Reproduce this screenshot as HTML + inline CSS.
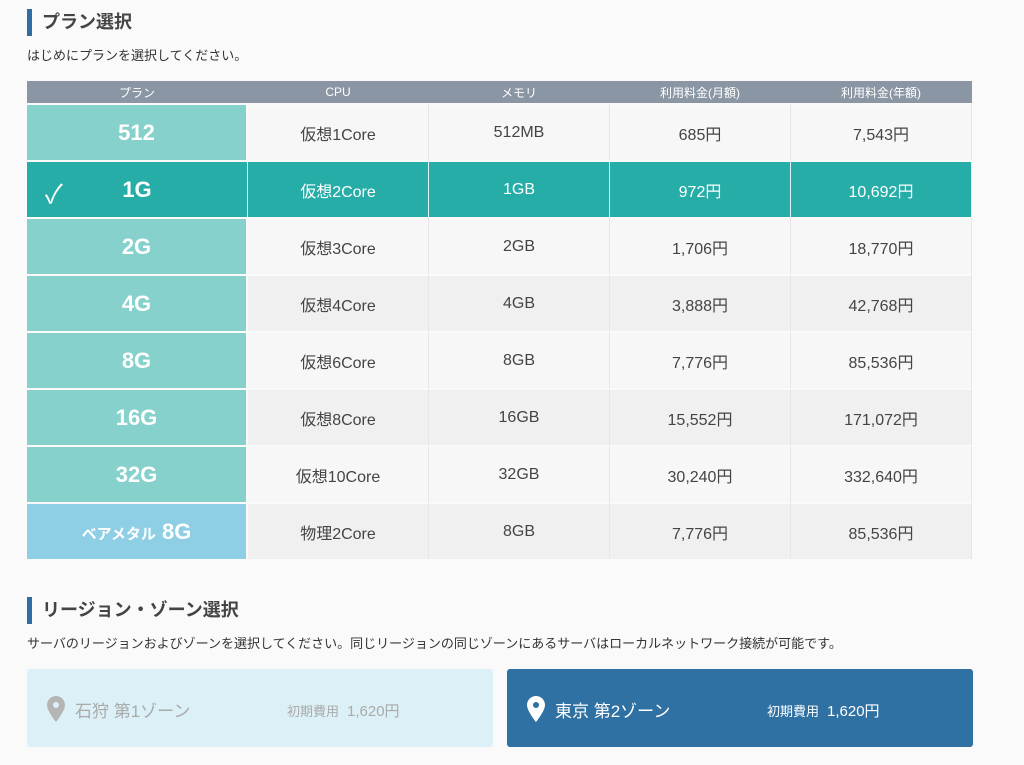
<!DOCTYPE html>
<html><head><meta charset="utf-8"><style>
*{margin:0;padding:0;box-sizing:border-box}
body{width:1024px;height:765px;background:#fafafa;font-family:"Liberation Sans","Noto Sans CJK JP",sans-serif;color:#333;position:relative;overflow:hidden}
.h{position:absolute;left:27px;border-left:5px solid #2e6ea5;padding-left:10px;font-size:18px;font-weight:bold;color:#444;height:27px;line-height:27px}
.p{position:absolute;left:27px;font-size:13px;color:#333}
table{position:absolute;left:27px;top:81px;width:945px;border-collapse:separate;border-spacing:0}
th{background:#8a96a3;color:#fff;font-weight:normal;font-size:12px;height:22px;border-right:1px solid #8a96a3}
td{height:57px;text-align:center;font-size:16px;color:#444;border-top:2px solid #fafafa;border-right:1px solid #e6e6e6}
col.c1{width:221px}col.c{width:181px}
tr.a td{background:#f7f7f7}tr.b td{background:#f0f0f0}
td.pl{background:#86d1cb!important;color:#fff;font-size:22px;font-weight:bold;border-right:2px solid #fafafa}
tr.s td{background:#27ada8!important;color:#fff;border-right:1px solid #e0f3f2}
td.bm{background:#8fcfe5!important}
.card{position:absolute;top:669px;width:466px;height:78px;border-radius:3px}
.card .n{position:absolute;left:48px;top:28px;font-size:17px}
.card .f{position:absolute;left:260px;top:31px;font-size:13px}
.card .f b{font-weight:normal;font-size:15px;margin-left:8px}
.card svg{position:absolute;left:20px;top:27px}
</style></head><body>
<div class="h" style="top:9px">プラン選択</div>
<div class="p" style="top:45px">はじめにプランを選択してください。</div>
<table><colgroup><col class="c1"><col class="c"><col class="c"><col class="c"><col class="c"></colgroup>
<tr><th>プラン</th><th>CPU</th><th>メモリ</th><th>利用料金(月額)</th><th>利用料金(年額)</th></tr>
<tr class="a"><td class="pl">512</td><td>仮想1Core</td><td>512MB</td><td>685円</td><td>7,543円</td></tr>
<tr class="s"><td class="pl" style="position:relative;background:#27ada8!important"><span style="position:absolute;left:18px;top:12px;font-weight:normal;font-size:26px">✓</span>1G</td><td>仮想2Core</td><td>1GB</td><td>972円</td><td>10,692円</td></tr>
<tr class="a"><td class="pl">2G</td><td>仮想3Core</td><td>2GB</td><td>1,706円</td><td>18,770円</td></tr>
<tr class="b"><td class="pl">4G</td><td>仮想4Core</td><td>4GB</td><td>3,888円</td><td>42,768円</td></tr>
<tr class="a"><td class="pl">8G</td><td>仮想6Core</td><td>8GB</td><td>7,776円</td><td>85,536円</td></tr>
<tr class="b"><td class="pl">16G</td><td>仮想8Core</td><td>16GB</td><td>15,552円</td><td>171,072円</td></tr>
<tr class="a"><td class="pl">32G</td><td>仮想10Core</td><td>32GB</td><td>30,240円</td><td>332,640円</td></tr>
<tr class="b"><td class="pl bm"><span style="font-size:15px">ベアメタル</span> 8G</td><td>物理2Core</td><td>8GB</td><td>7,776円</td><td>85,536円</td></tr>
</table>
<div class="h" style="top:597px">リージョン・ゾーン選択</div>
<div class="p" style="top:633px">サーバのリージョンおよびゾーンを選択してください。同じリージョンの同じゾーンにあるサーバはローカルネットワーク接続が可能です。</div>
<div class="card" style="left:27px;background:#dcf0f7;color:#aaa">
<svg width="18" height="26" viewBox="0 0 18 26"><path d="M9 0C4 0 0 4 0 9c0 6 9 17 9 17s9-11 9-17c0-5-4-9-9-9zm0 12a3 3 0 1 1 0-6 3 3 0 0 1 0 6z" fill="#b5b5b5"/></svg>
<div class="n">石狩 第1ゾーン</div><div class="f">初期費用<b>1,620円</b></div></div>
<div class="card" style="left:507px;background:#2f71a3;color:#fff">
<svg width="18" height="26" viewBox="0 0 18 26"><path d="M9 0C4 0 0 4 0 9c0 6 9 17 9 17s9-11 9-17c0-5-4-9-9-9zm0 12a3 3 0 1 1 0-6 3 3 0 0 1 0 6z" fill="#fff"/></svg>
<div class="n">東京 第2ゾーン</div><div class="f">初期費用<b>1,620円</b></div></div>
</body></html>
